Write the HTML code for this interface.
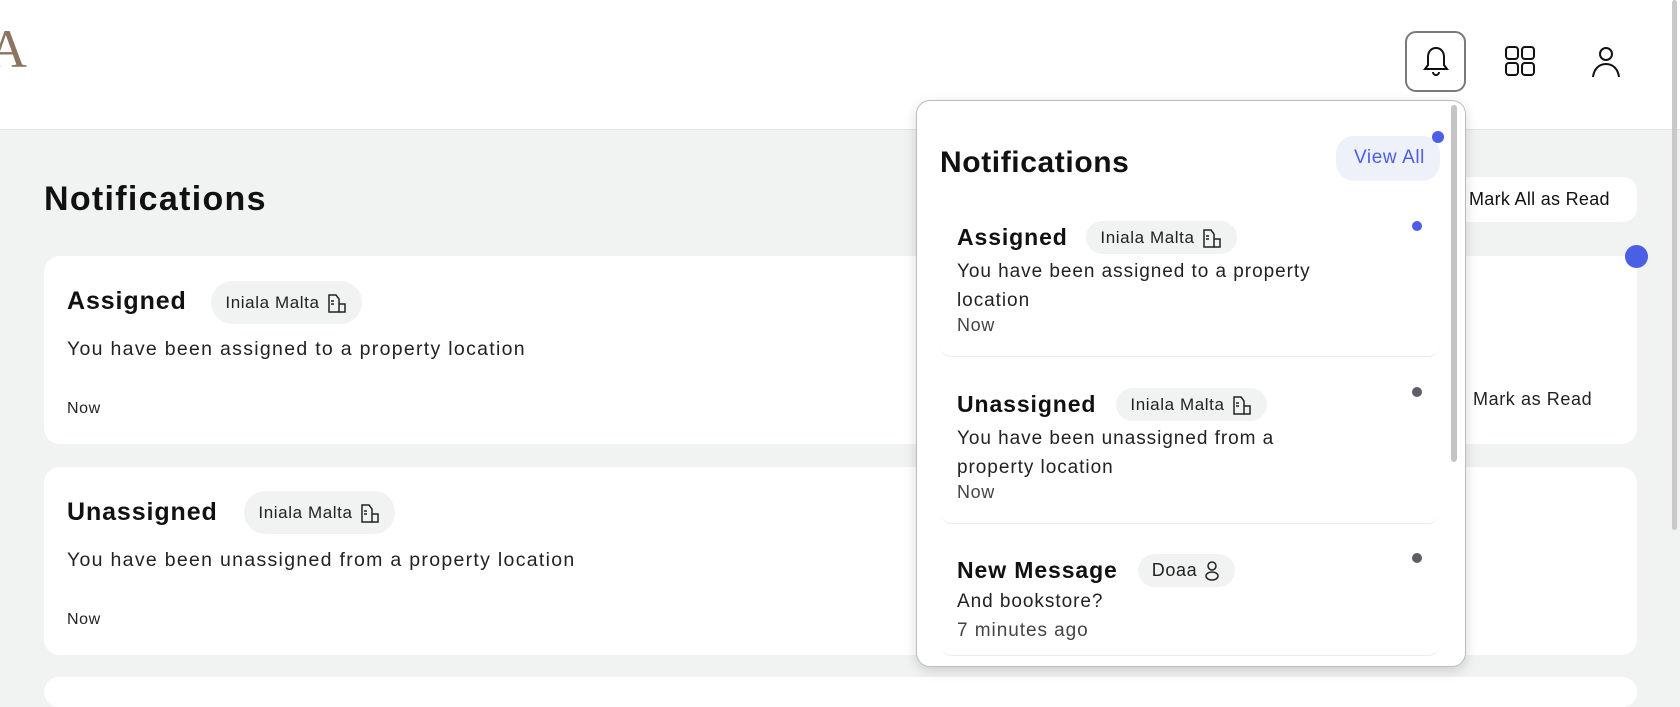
<!DOCTYPE html>
<html><head><meta charset="utf-8"><style>
*{margin:0;padding:0;box-sizing:border-box}
body{width:1680px;height:681px;overflow:hidden;background:#f1f2f2;font-family:"Liberation Sans",sans-serif;color:#111;position:relative;letter-spacing:0.6px}
.a{position:absolute}
.hdr{left:0;top:0;width:1680px;height:130px;background:#fff;border-bottom:1px solid #e2e2e2}
.card{background:#fff;border-radius:16px;left:44px;width:1593px}
.t{font-weight:bold;white-space:nowrap;letter-spacing:0.9px}
.chip{background:#f1f2f2;border-radius:22px;display:flex;align-items:center;justify-content:center;gap:6px;white-space:nowrap;color:#222}
.tx{white-space:nowrap;color:#222}
.b{letter-spacing:1.3px}
.d{letter-spacing:0.95px}
.dot{border-radius:50%}
</style></head><body>
<div class="a hdr"></div>
<div class="a" style="left:-12px;top:18px;font-family:'Liberation Serif',serif;font-size:54px;color:#8a7660;letter-spacing:0">A</div>
<div class="a" style="left:1405px;top:31px;width:61px;height:61px;border:2px solid #7a7a7a;border-radius:11px"></div>
<svg class="a" style="left:1420px;top:45px" width="32" height="34" viewBox="0 0 32 34" fill="none" stroke="#111" stroke-width="2"><path d="M16 3c-5 0-8 4-8 9v8l-3 4h22l-3-4v-8c0-5-3-9-8-9z"/><path d="M13 27a3 3 0 0 0 6 0"/></svg>
<svg class="a" style="left:1504px;top:45px" width="32" height="32" viewBox="0 0 32 32" fill="none" stroke="#111" stroke-width="2"><rect x="2" y="2" width="12" height="12" rx="3"/><rect x="18" y="2" width="12" height="12" rx="3"/><rect x="2" y="18" width="12" height="12" rx="3"/><rect x="18" y="18" width="12" height="12" rx="3"/></svg>
<svg class="a" style="left:1590px;top:45px" width="32" height="34" viewBox="0 0 32 34" fill="none" stroke="#111" stroke-width="2"><circle cx="16" cy="9" r="6"/><path d="M3 32c1-8 6-13 13-13s12 5 13 13"/></svg>
<div class="a" style="left:1672px;top:0;width:5px;height:530px;background:#c8c8c8;border-radius:3px"></div>

<div class="a t" style="left:44px;top:180px;font-size:34px;letter-spacing:1.3px">Notifications</div>
<div class="a" style="left:1446px;top:177px;width:191px;height:45px;background:#fff;border-radius:14px;font-size:18px;padding:12px 0 0 23px;white-space:nowrap;letter-spacing:0.3px">Mark All as Read</div>

<div class="a card" style="top:256px;height:188px"></div>
<div class="a t" style="left:67px;top:287px;font-size:25px">Assigned</div>
<div class="a chip" style="left:211px;top:281px;width:151px;height:43px;font-size:17px">Iniala Malta <svg width="22" height="22" viewBox="0 0 22 22" fill="none" stroke="#222" stroke-width="1.5"><path d="M3 20V3h7l3 4v13z"/><path d="M13 12h6v8h-6"/><path d="M5 9h3M5 12h3"/></svg></div>
<div class="a tx b" style="left:67px;top:338px;font-size:19.5px">You have been assigned to a property location</div>
<div class="a tx" style="left:67px;top:400px;font-size:16px">Now</div>
<div class="a tx" style="left:1473px;top:389px;font-size:18px">Mark as Read</div>
<div class="a dot" style="left:1625px;top:245px;width:23px;height:23px;background:#4a5ee6"></div>

<div class="a card" style="top:467px;height:188px"></div>
<div class="a t" style="left:67px;top:498px;font-size:25px">Unassigned</div>
<div class="a chip" style="left:244px;top:491px;width:151px;height:43px;font-size:17px">Iniala Malta <svg width="22" height="22" viewBox="0 0 22 22" fill="none" stroke="#222" stroke-width="1.5"><path d="M3 20V3h7l3 4v13z"/><path d="M13 12h6v8h-6"/><path d="M5 9h3M5 12h3"/></svg></div>
<div class="a tx b" style="left:67px;top:549px;font-size:19.5px">You have been unassigned from a property location</div>
<div class="a tx" style="left:67px;top:611px;font-size:16px">Now</div>
<div class="a card" style="top:677px;height:30px"></div>

<div class="a" style="left:916px;top:100px;width:550px;height:567px;background:#fff;border:1px solid #bdbdbd;border-radius:14px;box-shadow:0 4px 12px rgba(0,0,0,.15)"></div>
<div class="a" style="left:1451px;top:105px;width:6px;height:357px;background:#c4c4c4;border-radius:3px"></div>
<div class="a t" style="left:940px;top:146px;font-size:30px;letter-spacing:0.6px">Notifications</div>
<div class="a" style="left:1336px;top:136px;width:104px;height:45px;background:#eef0fa;border-radius:18px;color:#4a5ee6;font-size:19px;padding:11px 0 0 18px;white-space:nowrap">View All</div>
<div class="a dot" style="left:1432px;top:131px;width:12px;height:12px;background:#4a5ee6"></div>

<div class="a" style="left:940px;top:200px;width:500px;height:157px;border-bottom:1px solid #ececec;border-radius:12px"></div>
<div class="a t" style="left:957px;top:224px;font-size:23px">Assigned</div>
<div class="a chip" style="left:1086px;top:221px;width:151px;height:33px;font-size:17px">Iniala Malta <svg width="22" height="22" viewBox="0 0 22 22" fill="none" stroke="#222" stroke-width="1.5"><path d="M3 20V3h7l3 4v13z"/><path d="M13 12h6v8h-6"/><path d="M5 9h3M5 12h3"/></svg></div>
<div class="a tx d" style="left:957px;top:257px;font-size:19px;line-height:29px;white-space:normal;width:380px">You have been assigned to a property location</div>
<div class="a tx" style="left:957px;top:315px;font-size:18px;color:#444">Now</div>
<div class="a dot" style="left:1412px;top:221px;width:10px;height:10px;background:#4a5ee6"></div>

<div class="a" style="left:940px;top:367px;width:500px;height:157px;border-bottom:1px solid #ececec;border-radius:12px"></div>
<div class="a t" style="left:957px;top:391px;font-size:23px">Unassigned</div>
<div class="a chip" style="left:1116px;top:388px;width:151px;height:33px;font-size:17px">Iniala Malta <svg width="22" height="22" viewBox="0 0 22 22" fill="none" stroke="#222" stroke-width="1.5"><path d="M3 20V3h7l3 4v13z"/><path d="M13 12h6v8h-6"/><path d="M5 9h3M5 12h3"/></svg></div>
<div class="a tx d" style="left:957px;top:424px;font-size:19px;line-height:29px;white-space:normal;width:345px">You have been unassigned from a property location</div>
<div class="a tx" style="left:957px;top:482px;font-size:18px;color:#444">Now</div>
<div class="a dot" style="left:1412px;top:387px;width:10px;height:10px;background:#5e5e66"></div>

<div class="a" style="left:940px;top:534px;width:500px;height:122px;border-bottom:1px solid #ececec;border-radius:12px"></div>
<div class="a t" style="left:957px;top:557px;font-size:23px">New Message</div>
<div class="a chip" style="left:1138px;top:554px;width:97px;height:33px;font-size:18px">Doaa <svg width="18" height="22" viewBox="0 0 18 22" fill="none" stroke="#222" stroke-width="1.5"><circle cx="9" cy="6" r="4"/><ellipse cx="9" cy="16" rx="6" ry="4"/></svg></div>
<div class="a tx d" style="left:957px;top:591px;font-size:19px">And bookstore?</div>
<div class="a tx d" style="left:957px;top:620px;font-size:19px;color:#444">7 minutes ago</div>
<div class="a dot" style="left:1412px;top:553px;width:10px;height:10px;background:#5e5e66"></div>
</body></html>
